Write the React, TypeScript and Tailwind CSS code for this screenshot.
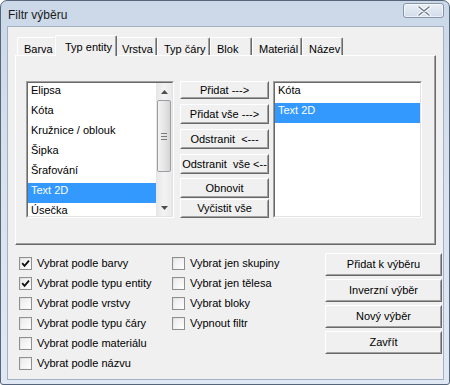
import React from "react";

const FONT = "font-['Liberation_Sans',Arial,sans-serif]";

function ClassicButton({
  label,
  className,
}: {
  label: string;
  className: string;
}) {
  return (
    <div
      className={`border border-white border-r-[#696969] border-b-[#696969] bg-[#f0f0f0] ${className}`}
    >
      <div className="w-full h-full border border-[#f0f0f0] border-r-[#a0a0a0] border-b-[#a0a0a0] flex items-center justify-center text-[11px] text-black whitespace-pre leading-none">
        {label}
      </div>
    </div>
  );
}

function Scrollbar() {
  return (
    <div className="w-[16px] h-full flex flex-col bg-gradient-to-r from-[#e6e6e6] via-[#f3f3f3] to-[#e9e9e9]">
      <div className="h-[17px] flex items-center justify-center">
        <svg width="7" height="4" viewBox="0 0 7 4">
          <path d="M0 4 L3.5 0 L7 4 Z" fill="#4d4d4d" />
        </svg>
      </div>
      <div className="h-[72px] mx-[1px] rounded-[2px] border border-[#9b9ea4] bg-gradient-to-r from-[#f3f3f3] via-[#e6e6e6] to-[#d5d5d5] flex flex-col items-center justify-center gap-[2px]">
        <div className="w-[6px] h-[1px] bg-[#7a7a7a]" />
        <div className="w-[6px] h-[1px] bg-[#7a7a7a]" />
        <div className="w-[6px] h-[1px] bg-[#7a7a7a]" />
      </div>
      <div className="flex-1" />
      <div className="h-[17px] flex items-center justify-center">
        <svg width="7" height="4" viewBox="0 0 7 4">
          <path d="M0 0 L3.5 4 L7 0 Z" fill="#4d4d4d" />
        </svg>
      </div>
    </div>
  );
}

function ListBox({
  items,
  selected,
  width,
  scroll,
}: {
  items: string[];
  selected: string;
  width: string;
  scroll?: boolean;
}) {
  return (
    <div
      className={`${width} h-[137px] border border-[#a0a0a0] border-r-white border-b-white`}
    >
      <div className="w-full h-full border border-[#696969] border-r-[#e3e3e3] border-b-[#e3e3e3] bg-white flex">
        <div className="flex-1 flex flex-col overflow-hidden">
          {items.map((it) => (
            <div
              key={it}
              className={`h-[20px] shrink-0 flex items-start pt-[1px] leading-[13px] pl-[3px] text-[11px] ${
                it === selected ? "bg-[#3399ff] text-white" : "text-black"
              }`}
            >
              {it}
            </div>
          ))}
        </div>
        {scroll && <Scrollbar />}
      </div>
    </div>
  );
}

function CheckBox({ label, checked }: { label: string; checked?: boolean }) {
  return (
    <div className="h-[20px] flex items-center">
      <div className="w-[13px] h-[13px] border border-[#8e8f8f] bg-gradient-to-br from-[#dcdcdc] to-white flex items-center justify-center">
        <div className="w-[9px] h-[9px] bg-gradient-to-br from-[#ececec] to-[#fdfdfd] flex items-center justify-center">
          {checked && (
            <svg width="9" height="9" viewBox="0 0 9 9">
              <path
                d="M1.2 4.2 L3.5 6.8 L8 1.6"
                fill="none"
                stroke="#111"
                strokeWidth="1.8"
              />
            </svg>
          )}
        </div>
      </div>
      <span className="ml-[5px] text-[11px] text-black">{label}</span>
    </div>
  );
}

function Tab({
  label,
  w,
  selected,
}: {
  label: string;
  w: string;
  selected?: boolean;
}) {
  if (selected) {
    return (
      <div
        className={`${w} h-[21px] mb-[-1px] mx-[-2px] relative z-10 bg-[#f0f0f0] border-t border-l border-white border-r border-r-[#696969] rounded-t-[2px] shadow-[inset_-1px_0_0_#a0a0a0] flex items-start pt-[3px] pl-[9px] text-[11px] text-black`}
      >
        {label}
      </div>
    );
  }
  return (
    <div
      className={`${w} h-[18px] bg-[#f0f0f0] border-t border-l border-white border-r border-r-[#696969] rounded-t-[2px] shadow-[inset_-1px_0_0_#a0a0a0] flex items-start pt-[3px] pl-[6px] text-[11px] text-black`}
    >
      {label}
    </div>
  );
}

export default function App() {
  return (
    <div className={`w-[450px] h-[385px] overflow-hidden bg-white ${FONT}`}>
      <div className="w-[450px] h-[385px] rounded-t-[7px] rounded-b-[3px] border border-[#56657a] bg-gradient-to-b from-[#cbd8e8] via-[#d9e3ef] to-[#dfe8f3] flex flex-col">
        {/* title bar */}
        <div className="h-[25px] flex items-start pt-[2px] pl-[7px] pr-[5px]">
          <span className="mt-[5px] leading-[14px] text-[12px] text-[#1b1b1b]">
            Filtr výběru
          </span>
          <div className="ml-auto w-[41px] h-[15px] rounded-[3px] border border-[#8695aa] bg-gradient-to-b from-[#e9eff6] to-[#d2dcea] flex items-center justify-center shadow-[inset_0_0_0_1px_rgba(255,255,255,0.6)]">
            <svg width="14" height="10" viewBox="0 0 14 10">
              <path
                d="M2 1 L12 9 M12 1 L2 9"
                stroke="#ffffff"
                strokeWidth="3.4"
                strokeLinecap="round"
              />
              <path
                d="M2 1 L12 9 M12 1 L2 9"
                stroke="#6f7b8b"
                strokeWidth="1.6"
                strokeLinecap="round"
              />
            </svg>
          </div>
        </div>

        {/* client area */}
        <div className="ml-[6px] w-[437px] h-[354px] border border-[#a3b1c3] bg-[#f0f0f0] flex flex-col">
          {/* tab control */}
          <div className="pl-[7px] pt-[8px] flex flex-col">
            <div className="h-[20px] flex items-end pl-[2px]">
              <Tab label="Barva" w="w-[40px]" />
              <Tab label="Typ entity" w="w-[62px]" selected />
              <Tab label="Vrstva" w="w-[42px]" />
              <Tab label="Typ čáry" w="w-[53px]" />
              <Tab label="Blok" w="w-[42px]" />
              <Tab label="Materiál" w="w-[50px]" />
              <Tab label="Název" w="w-[41px]" />
            </div>
            <div className="w-[421px] h-[190px] border-t border-l border-white border-r border-b border-r-[#696969] border-b-[#696969] shadow-[inset_-1px_-1px_0_#a0a0a0] pt-[25px] pl-[10px] flex items-start">
              <ListBox
                width="w-[148px]"
                scroll
                selected="Text 2D"
                items={[
                  "Elipsa",
                  "Kóta",
                  "Kružnice / oblouk",
                  "Šipka",
                  "Šrafování",
                  "Text 2D",
                  "Úsečka",
                ]}
              />
              <div className="ml-[6px] w-[89px] flex flex-col">
                <ClassicButton label="Přidat --->" className="h-[18px]" />
                <ClassicButton
                  label="Přidat vše --->"
                  className="h-[20px] mt-[5px]"
                />
                <ClassicButton
                  label="Odstranit  <---"
                  className="h-[20px] mt-[5px]"
                />
                <ClassicButton
                  label="Odstranit  vše <--"
                  className="h-[20px] mt-[5px]"
                />
                <ClassicButton label="Obnovit" className="h-[20px] mt-[4px]" />
                <ClassicButton
                  label="Vyčistit vše"
                  className="h-[19px] mt-[1px]"
                />
              </div>
              <div className="ml-[4px]">
                <ListBox
                  width="w-[149px]"
                  selected="Text 2D"
                  items={["Kóta", "Text 2D"]}
                />
              </div>
            </div>
          </div>

          {/* bottom section */}
          <div className="mt-[8px] pl-[11px] flex items-start">
            <div className="w-[153px] flex flex-col">
              <CheckBox label="Vybrat podle barvy" checked />
              <CheckBox label="Vybrat podle typu entity" checked />
              <CheckBox label="Vybrat podle vrstvy" />
              <CheckBox label="Vybrat podle typu čáry" />
              <CheckBox label="Vybrat podle materiálu" />
              <CheckBox label="Vybrat podle názvu" />
            </div>
            <div className="w-[153px] flex flex-col">
              <CheckBox label="Vybrat jen skupiny" />
              <CheckBox label="Vybrat jen tělesa" />
              <CheckBox label="Vybrat bloky" />
              <CheckBox label="Vypnout filtr" />
            </div>
            <div className="w-[117px] flex flex-col gap-[3px]">
              <ClassicButton label="Přidat k výběru" className="h-[23px]" />
              <ClassicButton label="Inverzní výběr" className="h-[23px]" />
              <ClassicButton label="Nový výběr" className="h-[23px]" />
              <ClassicButton label="Zavřít" className="h-[23px]" />
            </div>
          </div>
        </div>
      </div>
    </div>
  );
}
